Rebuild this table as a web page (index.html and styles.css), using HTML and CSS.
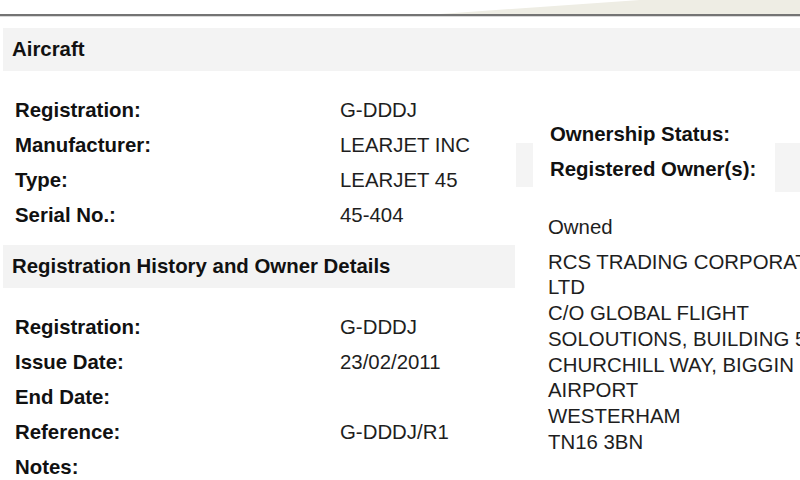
FILE: index.html
```html
<!DOCTYPE html>
<html>
<head>
<meta charset="utf-8">
<link rel="stylesheet" href="styles.css">
<title>Aircraft</title>
</head>
<body>
<div class="page">
  <div class="top">
    <svg class="wedge" width="800" height="14" viewBox="0 0 800 14" preserveAspectRatio="none"><polygon points="440,14 640,0 800,0 800,14" fill="#eeede4"/></svg>
  </div>
  <div class="rule"></div>
  <div class="bar full">Aircraft</div>
  <div class="cols">
    <div class="left">
      <div class="rows">
        <div class="row"><span class="lbl">Registration:</span><span class="val">G-DDDJ</span></div>
        <div class="row"><span class="lbl">Manufacturer:</span><span class="val">LEARJET INC</span></div>
        <div class="row"><span class="lbl">Type:</span><span class="val">LEARJET 45</span></div>
        <div class="row"><span class="lbl">Serial No.:</span><span class="val">45-404</span></div>
      </div>
      <div class="bar">Registration History and Owner Details</div>
      <div class="rows">
        <div class="row"><span class="lbl">Registration:</span><span class="val">G-DDDJ</span></div>
        <div class="row"><span class="lbl">Issue Date:</span><span class="val">23/02/2011</span></div>
        <div class="row"><span class="lbl">End Date:</span><span class="val"></span></div>
        <div class="row"><span class="lbl">Reference:</span><span class="val">G-DDDJ/R1</span></div>
        <div class="row"><span class="lbl">Notes:</span><span class="val"></span></div>
      </div>
    </div>
    <div class="right">
      <div class="own-head">
        <div class="stub"></div>
        <div class="own-labels">
          <div class="row"><span class="lbl">Ownership Status:</span></div>
          <div class="row"><span class="lbl">Registered Owner(s):</span></div>
        </div>
        <div class="stub stub-r"></div>
      </div>
      <div class="owned">Owned</div>
      <div class="address">RCS TRADING CORPORATION<br>LTD<br>C/O GLOBAL FLIGHT<br>SOLOUTIONS, BUILDING 5<br>CHURCHILL WAY, BIGGIN HILL<br>AIRPORT<br>WESTERHAM<br>TN16 3BN</div>
    </div>
  </div>
</div>
</body>
</html>
```
FILE: styles.css
```css
html, body {
  margin: 0;
  padding: 0;
  background: #ffffff;
  overflow: hidden;
}
.page {
  width: 800px;
  height: 480px;
  overflow: hidden;
  font-family: "Liberation Sans", Arial, sans-serif;
  font-size: 20.4px;
  color: #1e1e1e;
}
.top {
  height: 14px;
}
.wedge {
  display: block;
}
.rule {
  height: 2px;
  background: #747474;
  border-bottom: 1px solid #d8d8d8;
}
.bar {
  height: 43px;
  line-height: 43px;
  background: #f3f3f3;
  padding-left: 9px;
  font-weight: bold;
  color: #111;
  white-space: nowrap;
}
.bar.full {
  margin: 11px 0 0 3px;
}
.cols {
  display: flex;
  align-items: flex-start;
}
.left {
  width: 512px;
  margin-left: 3px;
  flex: none;
}
.left .bar {
  margin-top: 12px;
}
.rows {
  padding-top: 22px;
}
.row {
  display: flex;
  height: 35px;
  line-height: 35px;
  white-space: nowrap;
}
.rows .row {
  padding-left: 12px;
}
.lbl {
  font-weight: bold;
  color: #111;
}
.rows .lbl {
  width: 325px;
  flex: none;
}
.val {
  color: #1e1e1e;
}
.right {
  flex: 1;
  min-width: 0;
  overflow: hidden;
}
.own-head {
  display: flex;
  align-items: flex-start;
  padding-top: 46px;
}
.stub {
  width: 17px;
  height: 44px;
  margin-top: 26px;
  margin-left: 1px;
  background: #f4f4f4;
  flex: none;
}
.own-labels {
  margin-left: 17px;
}
.stub-r {
  margin-left: auto;
  width: 25px;
  height: 49px;
}
.owned {
  margin-top: 23px;
  padding-left: 33px;
  line-height: 25.7px;
}
.address {
  margin-top: 9px;
  padding-left: 33px;
  line-height: 25.7px;
  white-space: nowrap;
}
```
